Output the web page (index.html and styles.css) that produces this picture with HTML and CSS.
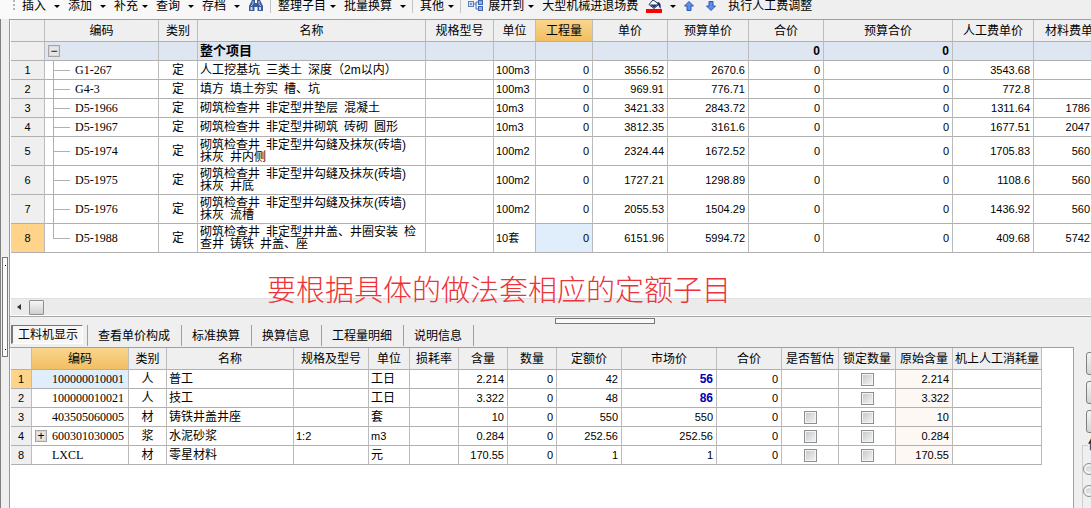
FILE: index.html
```html
<!DOCTYPE html>
<html lang="zh-CN">
<head>
<meta charset="utf-8">
<title>工程量清单</title>
<link rel="stylesheet" href="styles.css">
</head>
<body>
<div class="toolbar" role="toolbar">
  <span class="grip"></span>
  <button class="tool wide">插入<i class="caret"></i></button>
  <button class="tool wide">添加<i class="caret"></i></button>
  <button class="tool">补充<i class="caret"></i></button>
  <button class="tool wide">查询<i class="caret"></i></button>
  <button class="tool wide">存档<i class="caret"></i></button>
  <button class="tool" aria-label="查找">
    <svg width="16" height="12" viewBox="0 0 16 12"><path d="M4 0h3v3h2V0h3l3 6v5H9.500V7h-3v4H1V6z" fill="#3d5c9c"/><path d="M5 1v3L3 6M11 1v3l2 2" stroke="#a9c0ea" fill="none"/><path d="M2.500 7h2v3h-2zM11 7h2v3h-2z" fill="#c9d8f4"/></svg>
  </button>
  <span class="divider"></span>
  <button class="tool">整理子目<i class="caret"></i></button>
  <button class="tool wide">批量换算<i class="caret"></i></button>
  <span class="divider"></span>
  <button class="tool">其他<i class="caret"></i></button>
  <span class="divider"></span>
  <button class="tool">
    <svg width="16" height="12" viewBox="0 0 16 12"><path d="M5 4h3M8 2v7h2M8 2h2" stroke="#4a6db0" fill="none"/><rect x=".5" y="1.500" width="5" height="5" fill="#cfe0fa" stroke="#5b7fc4"/><path d="M2 4h2" stroke="#2c4f95"/><rect x="10.500" y=".5" width="4" height="4" fill="#8fb2ec" stroke="#3f66b0"/><rect x="10.500" y="6.500" width="4" height="4" fill="#8fb2ec" stroke="#3f66b0"/></svg>展开到<i class="caret"></i>
  </button>
  <button class="tool">大型机械进退场费</button>
  <button class="tool wide" aria-label="填充颜色">
    <svg width="16" height="13" viewBox="0 0 16 13"><path d="M7 0l6 4-5 4.500L3 4.500z" fill="#fff" stroke="#1b2c66"/><path d="M4 4.500h8L8 8z" fill="#22366f"/><path d="M12 2c3 1 3 4 2.500 7C13 7 13 5 11 4z" fill="#1b2c66"/><path d="M0 9h16v4H0z" fill="#f00"/></svg><i class="caret"></i>
  </button>
  <button class="tool arrow" aria-label="上移">
    <svg width="10" height="10" viewBox="0 0 10 10"><path d="M5 .5l4.500 4.500H7v4.500H3V5H.5z" fill="#5c8fe8" stroke="#2b56b4"/></svg>
  </button>
  <button class="tool arrow" aria-label="下移">
    <svg width="10" height="10" viewBox="0 0 10 10"><path d="M5 9.500L.5 5H3V.5h4V5h2.500z" fill="#5c8fe8" stroke="#2b56b4"/></svg>
  </button>
  <button class="tool">执行人工费调整</button>
</div>

<div class="workspace">
  <div class="rail"><span class="rail-handle"></span></div>
  <div class="content">
    <section class="upper">
      <table class="grid items">
        <colgroup><col class="w34"><col class="w114"><col class="w39"><col class="w228"><col class="w68"><col class="w42"><col class="w57"><col class="w75"><col class="w81"><col class="w75"><col class="w129"><col class="w81"><col class="w83"></colgroup>
        <thead><tr><th></th><th>编码</th><th>类别</th><th>名称</th><th>规格型号</th><th>单位</th><th class="active">工程量</th><th>单价</th><th>预算单价</th><th>合价</th><th>预算合价</th><th>人工费单价</th><th>材料费单价</th></tr></thead>
        <tbody>
          <tr class="total"><th></th><td class="root"><button class="expander" aria-label="折叠">−</button></td><td></td><td class="name">整个项目</td><td></td><td></td><td></td><td></td><td></td><td class="num">0</td><td class="num">0</td><td></td><td></td></tr>
          <tr><th>1</th><td class="code">G1-267</td><td class="mid">定</td><td>人工挖基坑&ensp;三类土&ensp;深度（2m以内）</td><td></td><td class="unit">100m3</td><td class="num">0</td><td class="num">3556.52</td><td class="num">2670.6</td><td class="num">0</td><td class="num">0</td><td class="num">3543.68</td><td></td></tr>
          <tr><th>2</th><td class="code">G4-3</td><td class="mid">定</td><td>填方&ensp;填土夯实&ensp;槽、坑</td><td></td><td class="unit">100m3</td><td class="num">0</td><td class="num">969.91</td><td class="num">776.71</td><td class="num">0</td><td class="num">0</td><td class="num">772.8</td><td></td></tr>
          <tr><th>3</th><td class="code">D5-1966</td><td class="mid">定</td><td>砌筑检查井&ensp;非定型井垫层&ensp;混凝土</td><td></td><td class="unit">10m3</td><td class="num">0</td><td class="num">3421.33</td><td class="num">2843.72</td><td class="num">0</td><td class="num">0</td><td class="num">1311.64</td><td class="num whole">1786</td></tr>
          <tr><th>4</th><td class="code">D5-1967</td><td class="mid">定</td><td>砌筑检查井&ensp;非定型井砌筑&ensp;砖砌&ensp;圆形</td><td></td><td class="unit">10m3</td><td class="num">0</td><td class="num">3812.35</td><td class="num">3161.6</td><td class="num">0</td><td class="num">0</td><td class="num">1677.51</td><td class="num whole">2047</td></tr>
          <tr class="tall"><th>5</th><td class="code">D5-1974</td><td class="mid">定</td><td>砌筑检查井&ensp;非定型井勾缝及抹灰(砖墙)&ensp;<wbr>抹灰&ensp;井内侧</td><td></td><td class="unit">100m2</td><td class="num">0</td><td class="num">2324.44</td><td class="num">1672.52</td><td class="num">0</td><td class="num">0</td><td class="num">1705.83</td><td class="num whole">560</td></tr>
          <tr class="tall"><th>6</th><td class="code">D5-1975</td><td class="mid">定</td><td>砌筑检查井&ensp;非定型井勾缝及抹灰(砖墙)&ensp;<wbr>抹灰&ensp;井底</td><td></td><td class="unit">100m2</td><td class="num">0</td><td class="num">1727.21</td><td class="num">1298.89</td><td class="num">0</td><td class="num">0</td><td class="num">1108.6</td><td class="num whole">560</td></tr>
          <tr class="tall"><th>7</th><td class="code">D5-1976</td><td class="mid">定</td><td>砌筑检查井&ensp;非定型井勾缝及抹灰(砖墙)&ensp;<wbr>抹灰&ensp;流槽</td><td></td><td class="unit">100m2</td><td class="num">0</td><td class="num">2055.53</td><td class="num">1504.29</td><td class="num">0</td><td class="num">0</td><td class="num">1436.92</td><td class="num whole">560</td></tr>
          <tr class="tall"><th class="current">8</th><td class="code last">D5-1988</td><td class="mid">定</td><td>砌筑检查井&ensp;非定型井井盖、井圈安装&ensp;检查井&ensp;铸铁&ensp;井盖、座</td><td></td><td class="unit">10套</td><td class="num focus">0</td><td class="num">6151.96</td><td class="num">5994.72</td><td class="num">0</td><td class="num">0</td><td class="num">409.68</td><td class="num whole">5742</td></tr>
        </tbody>
      </table>
      <p class="note">要根据具体的做法套相应的定额子目</p>
      <div class="scrollbar"><i class="scroll-left"></i><span class="thumb"></span></div>
    </section>

    <nav class="tabs">
      <span class="split-handle"></span>
      <div class="tab-first"><button class="tab selected">工料机显示</button></div>
      <button class="tab">查看单价构成</button>
      <button class="tab">标准换算</button>
      <button class="tab">换算信息</button>
      <button class="tab">工程量明细</button>
      <button class="tab">说明信息</button>
    </nav>

    <div class="lower">
      <section class="detail">
        <table class="grid parts">
          <colgroup><col class="w21"><col class="w97"><col class="w38"><col class="w127"><col class="w75"><col class="w41"><col class="w49"><col class="w49"><col class="w49"><col class="w65"><col class="w95"><col class="w65"><col class="w57"><col class="w57"><col class="w57"><col class="w57"><col class="w32"></colgroup>
          <thead><tr><th></th><th class="active">编码</th><th>类别</th><th>名称</th><th>规格及型号</th><th>单位</th><th>损耗率</th><th>含量</th><th>数量</th><th>定额价</th><th>市场价</th><th>合价</th><th>是否暂估</th><th>锁定数量</th><th>原始含量</th><th colspan="2">机上人工消耗量</th></tr></thead>
          <tbody>
            <tr><th class="current">1</th><td class="part focus">100000010001</td><td class="mid">人</td><td>普工</td><td></td><td>工日</td><td></td><td class="num">2.214</td><td class="num">0</td><td class="num">42</td><td class="num price">56</td><td class="num">0</td><td></td><td class="mid"><input type="checkbox" aria-label="锁定数量"></td><td class="num origin">2.214</td><td colspan="2"></td></tr>
            <tr><th>2</th><td class="part">100000010021</td><td class="mid">人</td><td>技工</td><td></td><td>工日</td><td></td><td class="num">3.322</td><td class="num">0</td><td class="num">48</td><td class="num price">86</td><td class="num">0</td><td></td><td class="mid"><input type="checkbox" aria-label="锁定数量"></td><td class="num origin">3.322</td><td colspan="2"></td></tr>
            <tr><th>3</th><td class="part">403505060005</td><td class="mid">材</td><td>铸铁井盖井座</td><td></td><td>套</td><td></td><td class="num">10</td><td class="num">0</td><td class="num">550</td><td class="num">550</td><td class="num">0</td><td class="mid"><input type="checkbox" aria-label="是否暂估"></td><td class="mid"><input type="checkbox" aria-label="锁定数量"></td><td class="num origin">10</td><td colspan="2"></td></tr>
            <tr><th>4</th><td class="part"><button class="expander" aria-label="展开">+</button>600301030005</td><td class="mid">浆</td><td>水泥砂浆</td><td class="unit">1:2</td><td class="unit">m3</td><td></td><td class="num">0.284</td><td class="num">0</td><td class="num">252.56</td><td class="num">252.56</td><td class="num">0</td><td class="mid"><input type="checkbox" aria-label="是否暂估"></td><td class="mid"><input type="checkbox" aria-label="锁定数量"></td><td class="num origin">0.284</td><td colspan="2"></td></tr>
            <tr><th>8</th><td class="part">LXCL</td><td class="mid">材</td><td>零星材料</td><td></td><td>元</td><td></td><td class="num">170.55</td><td class="num">0</td><td class="num">1</td><td class="num">1</td><td class="num">0</td><td class="mid"><input type="checkbox" aria-label="是否暂估"></td><td class="mid"><input type="checkbox" aria-label="锁定数量"></td><td class="num origin">170.55</td><td colspan="2"></td></tr>
          </tbody>
        </table>
      </section>
      <aside class="side">
        <button class="side-button" aria-label="操作一"></button>
        <button class="side-button" aria-label="操作二"></button>
        <button class="side-button" aria-label="操作三"></button>
        <fieldset class="choices">
          <legend>信</legend>
          <input type="radio" name="info" aria-label="选项一">
          <input type="radio" name="info" aria-label="选项二">
        </fieldset>
      </aside>
    </div>
  </div>
</div>
</body>
</html>
```

FILE: styles.css
```css
* { box-sizing: border-box; }

body {
  margin: 0;
  height: 100vh;
  display: flex;
  flex-direction: column;
  overflow: hidden;
  background: #efefef;
  color: #000;
  font: 12px/12px "Liberation Sans", "Noto Sans CJK SC", sans-serif;
  text-spacing-trim: space-all;
}

button {
  margin: 0;
  padding: 0;
  border: 0;
  background: none;
  color: inherit;
  font: inherit;
  white-space: nowrap;
}

svg { display: block; }

/* Toolbar */
.toolbar {
  flex: none;
  display: flex;
  align-items: flex-start;
  height: 19px;
  padding-left: 13px;
  background: linear-gradient(90deg, #fafafa, #efefef 800px);
}
.grip {
  width: 2px;
  height: 12px;
  margin-right: 7px;
  background: repeating-linear-gradient(#b5b5b5 0 2px, transparent 2px 4px);
}
.tool {
  flex: none;
  display: flex;
  align-items: center;
  gap: 4px;
  height: 12px;
  margin-right: 8px;
}
.tool.wide { gap: 8px; }
.tool.arrow { margin-right: 12px; }
.caret {
  border: 3px solid transparent;
  border-top-color: #000;
  border-bottom: 0;
}
.divider {
  flex: none;
  width: 1px;
  height: 13px;
  margin: 0 7px 0 -2px;
  background: #c4c4c4;
}

/* Frame */
.workspace {
  flex: 1;
  min-height: 0;
  display: flex;
}
.rail {
  flex: none;
  position: relative;
  width: 9px;
  border-left: 1px solid #808080;
}
.rail-handle {
  position: absolute;
  left: 1px;
  top: 238px;
  width: 6px;
  height: 100px;
  border: 1px solid #777;
  background: #fafafa;
}
.rail-handle::before,
.rail-handle::after {
  content: "";
  position: absolute;
  left: 2px;
  top: 7px;
  width: 1px;
  height: 1px;
  background: #000;
}
.rail-handle::after { top: 91px; }
.content {
  flex: 1;
  min-width: 0;
  display: flex;
  flex-direction: column;
  border-left: 1px solid #999;
}

/* Tables */
.grid {
  border-collapse: separate;
  border-spacing: 0;
  table-layout: fixed;
}
.items { width: 1106px; }
.parts { width: 1031px; }
.grid th,
.grid td {
  height: 19px;
  padding: 0 2px;
  border-right: 1px solid #bcbcbc;
  border-bottom: 1px solid #b0b0b0;
  background: #fff;
  font-weight: 400;
  text-align: left;
  vertical-align: middle;
}
.grid th {
  background: #efefef;
  text-align: center;
  white-space: nowrap;
}
.grid thead th {
  height: 22px;
  padding: 0;
}
.grid tbody th { font-size: 11px; }
.grid .tall th,
.grid .tall td { height: 29px; }
.grid th.active { background: linear-gradient(#fad58e, #f1bf62); }
.grid th.current { background: #ffd48a; }
.grid td.focus { background: #e0eefc; }
.grid td.mid { text-align: center; }
.grid td.num {
  padding-right: 3px;
  font-size: 11px;
  text-align: right;
}
.grid td.whole { padding-right: 26px; }
.grid td.unit { font-size: 11px; }
.grid td.origin { background: #fdf8f4; }
.grid td.price {
  color: #0000b4;
  font-size: 12px;
  font-weight: 700;
}
.grid .total td {
  background: #dde6f1;
  font-size: 12px;
  font-weight: 700;
}
.grid .total td.name { font-size: 13px; }

.w21 { width: 21px; }
.w32 { width: 32px; }
.w34 { width: 34px; }
.w38 { width: 38px; }
.w39 { width: 39px; }
.w41 { width: 41px; }
.w42 { width: 42px; }
.w49 { width: 49px; }
.w57 { width: 57px; }
.w65 { width: 65px; }
.w68 { width: 68px; }
.w75 { width: 75px; }
.w81 { width: 81px; }
.w83 { width: 83px; }
.w95 { width: 95px; }
.w97 { width: 97px; }
.w114 { width: 114px; }
.w127 { width: 127px; }
.w129 { width: 129px; }
.w228 { width: 228px; }

/* Tree column */
.grid td.code,
.grid td.part {
  position: relative;
  font-family: "Liberation Serif", serif;
}
.grid td.code { padding-left: 30px; }
.grid td.part { padding-left: 20px; }
.code::before,
.code::after {
  content: "";
  position: absolute;
  left: 8px;
  background: #b0b0b0;
}
.code::before {
  top: 0;
  bottom: -1px;
  width: 1px;
}
.code.last::before { bottom: 50%; }
.code::after {
  top: 50%;
  width: 17px;
  height: 1px;
}
.expander {
  display: block;
  width: 12px;
  height: 12px;
  border: 1px solid #a5a5a5;
  outline: 1px solid #d8d8d8;
  outline-offset: -2px;
  background: #e6e6e6;
  font: 400 12px/10px "Liberation Sans", sans-serif;
}
.root .expander { margin-left: 1px; }
.part .expander {
  position: absolute;
  left: 3px;
  top: 3px;
}

/* Check boxes and radios */
input[type="checkbox"] {
  appearance: none;
  display: block;
  width: 13px;
  height: 13px;
  margin: 0 auto;
  border: 1px solid #8e8f8f;
  background: linear-gradient(135deg, #c2c6ca, #f6f6f6);
  box-shadow: inset 0 0 0 1px #f4f4f4;
}
input[type="radio"] {
  appearance: none;
  display: block;
  width: 12px;
  height: 12px;
  margin: 0 0 10px;
  border: 1px solid #8e8f8f;
  border-radius: 50%;
  background: linear-gradient(135deg, #c2c6ca, #f6f6f6);
  box-shadow: inset 0 0 0 2px #f4f4f4;
}

/* Upper pane */
.upper {
  flex: none;
  position: relative;
  display: flex;
  flex-direction: column;
  height: 298px;
  padding-left: 1px;
  overflow: hidden;
  border-top: 1px solid #a0a0a0;
  border-bottom: 1px solid #a8a8a8;
  background: #fff;
}
.note {
  position: absolute;
  z-index: 1;
  left: 257px;
  top: 254px;
  margin: 0;
  color: #ee3338;
  font: 300 29px/29px "Noto Sans CJK SC", sans-serif;
  white-space: nowrap;
}
.scrollbar {
  display: flex;
  align-items: center;
  gap: 8px;
  height: 18px;
  margin-top: auto;
  padding-left: 6px;
  border-top: 1px solid #e0e0e0;
  border-bottom: 1px solid #fff;
  background: #ebebeb;
}
.scroll-left {
  border: 3px solid transparent;
  border-right: 4px solid #333;
  border-left: 0;
}
.thumb {
  width: 15px;
  height: 15px;
  border: 1px solid #8f8f8f;
  border-radius: 1px;
  background: linear-gradient(#f6f6f6, #cfcfcf);
}

/* Tabs */
.tabs {
  flex: none;
  position: relative;
  display: flex;
  align-items: flex-start;
  height: 30px;
  padding: 8px 0 0 1px;
}
.split-handle {
  position: absolute;
  left: 50%;
  top: 1px;
  width: 100px;
  height: 6px;
  margin-left: 4px;
  border: 1px solid #777;
  background: #fafafa;
}
.tab-first,
.tab {
  height: 21px;
  border-right: 1px solid #a0a0a0;
}
.tab-first { padding-right: 4px; }
.tab { padding: 0 11px 0 10px; }
.tab.selected {
  height: 19px;
  padding: 0 4px 0 5px;
  border: 1px solid #fff;
  border-top: 1px solid #777;
  border-left: 2px solid #777;
  background: #f6f6f6;
}

/* Lower pane */
.lower {
  flex: 1;
  min-height: 0;
  display: flex;
}
.detail {
  flex: 1;
  min-width: 0;
  padding-left: 1px;
  overflow: hidden;
  border-top: 1px solid #a0a0a0;
  border-right: 1px solid #a0a0a0;
  background: #fff;
}
.side {
  flex: none;
  width: 17px;
  padding: 5px 0 0 8px;
  overflow: hidden;
}
.side-button {
  display: block;
  width: 60px;
  height: 23px;
  margin: 0 0 6px 4px;
  border: 1px solid #808080;
  border-radius: 3px;
  background: linear-gradient(#f4f4f4, #d4d4d4);
}
.choices {
  width: 64px;
  height: 100px;
  margin: 0;
  padding: 12px 0 0;
  border: 1px solid #d0d0d0;
}
.choices legend {
  margin-left: 5px;
  padding: 0;
}
```
